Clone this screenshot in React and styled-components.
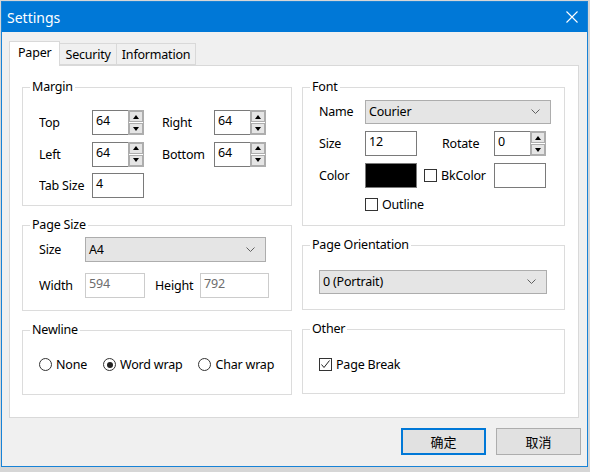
import React from "react";
import styled, { createGlobalStyle } from "styled-components";

const GlobalStyle = createGlobalStyle`
    html, body {
        margin: 0;
        padding: 0;
        background: #d6d6d6;
    }
    body {
        font-family: "Noto Sans", "Noto Sans CJK SC", sans-serif;
        font-size: 12.5px;
        letter-spacing: -0.2px;
        color: #000;
    }
`;

const Window = styled.div`
    margin: 1px 0 0 1px;
    width: 587px;
    height: 466px;
    box-sizing: border-box;
    border: 1px solid #1883d7;
    background: #f0f0f0;
    display: flex;
    flex-direction: column;
`;

const TitleBar = styled.div`
    height: 30px;
    background: #0078d7;
    color: #fff;
    display: flex;
    align-items: center;
    justify-content: space-between;
    padding: 0 9px 0 5px;
    font-size: 14px;
    letter-spacing: 0;
`;

const Body = styled.div`
    flex: 1;
    padding: 9px 8px 0 7px;
    display: flex;
    flex-direction: column;
`;

const Tabs = styled.div`
    display: flex;
    align-items: flex-end;
    height: 24px;
`;

const Tab = styled.div`
    box-sizing: border-box;
    height: ${p => (p.$active ? 25 : 22)}px;
    margin-bottom: ${p => (p.$active ? -1 : 0)}px;
    padding: ${p => (p.$active ? "0 8px 3px" : "0 5px 0")};
    border: 1px solid #d9d9d9;
    border-bottom: ${p => (p.$active ? "none" : "1px solid #d9d9d9")};
    border-left: ${p => (p.$first ? "1px solid #d9d9d9" : "none")};
    background: ${p => (p.$active ? "#fff" : "#f0f0f0")};
    display: flex;
    align-items: center;
    position: relative;
    z-index: ${p => (p.$active ? 1 : 0)};
`;

const Panel = styled.div`
    height: 353px;
    box-sizing: border-box;
    background: #fff;
    border: 1px solid #d9d9d9;
    padding: 13px 12px 0 12px;
    display: flex;
    gap: 10px;
`;

const Column = styled.div`
    width: ${p => p.$w}px;
    display: flex;
    flex-direction: column;
    gap: 11px;
`;

const Group = styled.fieldset`
    margin: 0;
    min-width: 0;
    height: ${p => p.$h}px;
    box-sizing: border-box;
    border: 1px solid #dcdcdc;
    padding: ${p => p.$pad || "0 0 0 16px"};
`;

const Legend = styled.legend`
    margin-left: -9px;
    padding: 0 2px;
    line-height: 16px;
`;

const Grid = styled.div`
    display: grid;
    grid-template-columns: ${p => p.$cols};
    grid-auto-rows: ${p => p.$row || 25}px;
    row-gap: ${p => p.$gap || 6.5}px;
    align-items: center;
`;

const Label = styled.span`
    padding-left: ${p => p.$indent || 0}px;
    white-space: nowrap;
    overflow: hidden;
`;

const Field = styled.div`
    box-sizing: border-box;
    width: ${p => p.$w || 52}px;
    height: 25px;
    border: 1px solid ${p => (p.$disabled ? "#cccccc" : "#7a7a7a")};
    color: ${p => (p.$disabled ? "#6d6d6d" : "#000")};
    background: ${p => p.$fill || "#fff"};
    padding: 1px 0 0 3px;
    line-height: 18px;
`;

const SpinWrap = styled.div`
    display: flex;
    width: 52px;
    height: 25px;
`;

const SpinInput = styled.div`
    flex: 1;
    box-sizing: border-box;
    border: 1px solid #7a7a7a;
    border-right: none;
    padding: 1px 0 0 3px;
    line-height: 18px;
`;

const SpinButtons = styled.div`
    width: 16px;
    box-sizing: border-box;
    border: 1px solid #adadad;
    background: #fff;
    display: flex;
    flex-direction: column;
    gap: 1px;
    padding: 1px;
`;

const SpinButton = styled.div`
    flex: 1;
    background: #e5e5e5;
    border: 1px solid #adadad;
    margin: -1px -1px 0;
    display: flex;
    align-items: center;
    justify-content: center;
    &:last-child {
        margin: 0 -1px -1px;
    }
`;

const Arrow = styled.span`
    width: 0;
    height: 0;
    border-left: 3px solid transparent;
    border-right: 3px solid transparent;
    ${p => (p.$down ? "border-top: 4px solid #000;" : "border-bottom: 4px solid #000;")}
`;

const Combo = styled.div`
    box-sizing: border-box;
    width: ${p => p.$w}px;
    height: ${p => p.$h || 24}px;
    background: #e5e5e5;
    border: 1px solid #adadad;
    display: flex;
    align-items: center;
    justify-content: space-between;
    padding: 0 10px 1px 3px;
`;

const CheckRow = styled.label`
    display: flex;
    align-items: center;
    gap: 4px;
    white-space: nowrap;
`;

const Box = styled.span`
    box-sizing: border-box;
    width: 13px;
    height: 13px;
    border: 1px solid #333;
    background: #fff;
    display: flex;
    align-items: center;
    justify-content: center;
    border-radius: ${p => (p.$round ? "50%" : "0")};
`;

const Dot = styled.span`
    width: 6px;
    height: 6px;
    border-radius: 50%;
    background: #222;
`;

const RadioRow = styled.div`
    display: flex;
    gap: 16px;
    padding-top: 18px;
`;

const Cell = styled.div`
    grid-column: ${p => p.$span || "auto"};
    padding-left: ${p => p.$indent || 0}px;
    align-self: ${p => p.$align || "center"};
    padding-top: ${p => p.$top || 0}px;
`;

const Footer = styled.div`
    display: flex;
    justify-content: flex-end;
    gap: 10px;
    padding: 10px 0 0;
    margin-right: -2px;
`;

const Button = styled.div`
    box-sizing: border-box;
    width: 85px;
    height: 27px;
    background: #e1e1e1;
    border: ${p => (p.$default ? "2px solid #0078d7" : "1px solid #adadad")};
    display: flex;
    align-items: center;
    justify-content: center;
    font-family: "Noto Sans CJK SC", sans-serif;
    font-size: 13px;
    letter-spacing: 0;
`;

const Chevron = () => (
    <svg width="9" height="5" viewBox="0 0 9 5">
        <path d="M0.5 0.5 L4.5 4.5 L8.5 0.5" fill="none" stroke="#606060" strokeWidth="1" />
    </svg>
);

const Close = () => (
    <svg width="12" height="12" viewBox="0 0 12 12">
        <path d="M0.5 0.5 L11.5 11.5 M11.5 0.5 L0.5 11.5" stroke="#fff" strokeWidth="1.1" />
    </svg>
);

const Tick = () => (
    <svg width="11" height="11" viewBox="0 0 11 11">
        <path d="M1.5 5.5 L4 8.5 L9.5 1.5" fill="none" stroke="#222" strokeWidth="1" />
    </svg>
);

const Spin = ({ value }) => (
    <SpinWrap>
        <SpinInput>{value}</SpinInput>
        <SpinButtons>
            <SpinButton><Arrow /></SpinButton>
            <SpinButton><Arrow $down /></SpinButton>
        </SpinButtons>
    </SpinWrap>
);

const Check = ({ checked, children }) => (
    <CheckRow>
        <Box>{checked && <Tick />}</Box>
        {children}
    </CheckRow>
);

const Radio = ({ checked, children }) => (
    <CheckRow>
        <Box $round>{checked && <Dot />}</Box>
        {children}
    </CheckRow>
);

const App = () => {
    return (
        <>
            <GlobalStyle />
            <Window>
                <TitleBar>
                    <span>Settings</span>
                    <Close />
                </TitleBar>
                <Body>
                    <Tabs>
                        <Tab $active $first>Paper</Tab>
                        <Tab>Security</Tab>
                        <Tab>Information</Tab>
                    </Tabs>
                    <Panel>
                        <Column $w={270}>
                            <Group $h={127} $pad="15px 0 0 16px">
                                <Legend>Margin</Legend>
                                <Grid $cols="53px 52px 70px 52px">
                                    <Label>Top</Label>
                                    <Spin value="64" />
                                    <Label $indent={18}>Right</Label>
                                    <Spin value="64" />
                                    <Label>Left</Label>
                                    <Spin value="64" />
                                    <Label $indent={18}>Bottom</Label>
                                    <Spin value="64" />
                                    <Label>Tab Size</Label>
                                    <Field>4</Field>
                                </Grid>
                            </Group>
                            <Group $h={94} $pad="4px 0 0 16px">
                                <Legend>Page Size</Legend>
                                <Grid $cols="46px 60px 55px 69px" $gap={11}>
                                    <Label>Size</Label>
                                    <Cell $span="2 / 5">
                                        <Combo $w={181} $h={25}>
                                            <span>A4</span>
                                            <Chevron />
                                        </Combo>
                                    </Cell>
                                    <Label>Width</Label>
                                    <Field $w={60} $disabled>594</Field>
                                    <Label $indent={10}>Height</Label>
                                    <Field $w={69} $disabled>792</Field>
                                </Grid>
                            </Group>
                            <Group $h={73}>
                                <Legend>Newline</Legend>
                                <RadioRow>
                                    <Radio>None</Radio>
                                    <Radio checked>Word wrap</Radio>
                                    <Radio>Char wrap</Radio>
                                </RadioRow>
                            </Group>
                        </Column>
                        <Column $w={263}>
                            <Group $h={147} $pad="4px 0 0 16px">
                                <Legend>Font</Legend>
                                <Grid $cols="46px 52px 77px 52px" $gap={7}>
                                    <Label>Name</Label>
                                    <Cell $span="2 / 5">
                                        <Combo $w={186}>
                                            <span>Courier</span>
                                            <Chevron />
                                        </Combo>
                                    </Cell>
                                    <Label>Size</Label>
                                    <Field>12</Field>
                                    <Label $indent={25}>Rotate</Label>
                                    <Spin value="0" />
                                    <Label>Color</Label>
                                    <Field $fill="#000" />
                                    <Cell $indent={7}>
                                        <Check>BkColor</Check>
                                    </Cell>
                                    <Field />
                                    <Cell $span="2 / 5" $align="start" $top={1}>
                                        <Check>Outline</Check>
                                    </Cell>
                                </Grid>
                            </Group>
                            <Group $h={73} $pad="17px 0 0 16px">
                                <Legend>Page Orientation</Legend>
                                <Combo $w={228}>
                                    <span>0 (Portrait)</span>
                                    <Chevron />
                                </Combo>
                            </Group>
                            <Group $h={73} $pad="19px 0 0 16px">
                                <Legend>Other</Legend>
                                <Check checked>Page Break</Check>
                            </Group>
                        </Column>
                    </Panel>
                    <Footer>
                        <Button $default>确定</Button>
                        <Button>取消</Button>
                    </Footer>
                </Body>
            </Window>
        </>
    );
};

export default App;
